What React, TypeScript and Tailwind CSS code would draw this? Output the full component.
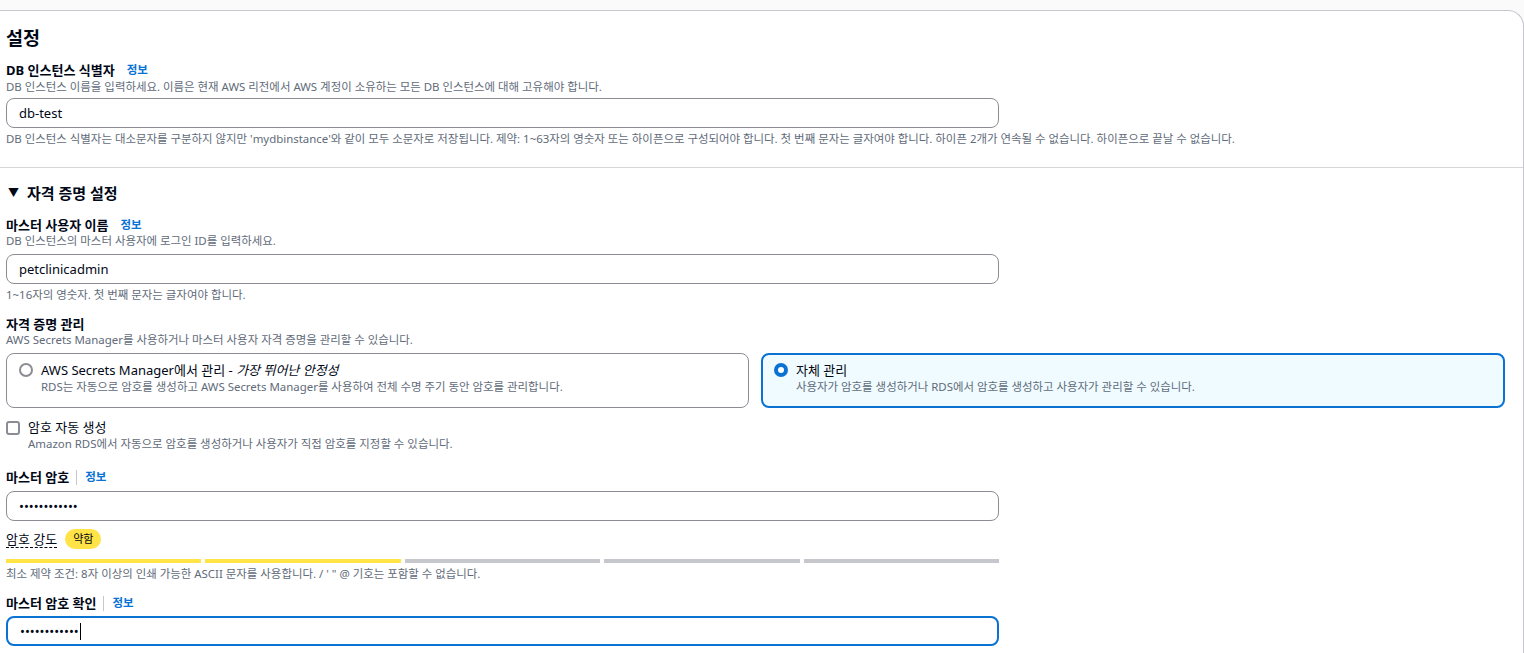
import React from "react";

const FONT = { fontFamily: '"Noto Sans", "Noto Sans CJK KR", sans-serif' };

function Info({ sep = false }: { sep?: boolean }) {
  return (
    <span className={`flex items-center ${sep ? "ml-[7px]" : "ml-[12px]"}`}>
      {sep && <span className="mr-[8px] h-[15px] w-px bg-[#c6c6cd]" />}
      <span className="text-[11.5px] font-bold text-[#0972d3]">정보</span>
    </span>
  );
}

function Label({ children, info }: { children: React.ReactNode; info: React.ReactNode }) {
  return (
    <div className="flex h-[16px] items-center">
      <span className="text-[13px] font-bold leading-[16px] text-[#000716]">{children}</span>
      {info}
    </div>
  );
}

function Desc({ children, className = "" }: { children: React.ReactNode; className?: string }) {
  return <div className={`whitespace-nowrap text-[11.45px] leading-[14px] text-[#5f6b7a] ${className}`}>{children}</div>;
}

function Input({ value, focused = false, className = "", caret = false }: { value: string; focused?: boolean; className?: string; caret?: boolean }) {
  return (
    <div
      className={`flex h-[30px] w-[993px] items-center rounded-[8px] bg-white px-[12px] ${
        focused ? "border-2 border-[#0972d3] px-[11px]" : "border border-[#8c8c94]"
      } ${className}`}
    >
      <span className="text-[13px] leading-[16px] text-[#000716]">{value}</span>
      {caret && <span className="ml-[1px] h-[17px] w-px bg-black" />}
    </div>
  );
}

export default function App() {
  const dots = "••••••••••••";
  return (
    <div style={FONT} className="h-[653px] w-[1524px] overflow-hidden bg-[#fafafa]">
      <div className="mt-[10px] h-[700px] -ml-[20px] rounded-tr-[16px] border-t border-r border-[#c6c6cd] bg-white pl-[26px] pt-[14px]">
        <div className="text-[18.5px] font-bold leading-[26px] text-[#000716]">설정</div>

        <div className="mt-[11px]">
          <Label info={<Info />}>DB 인스턴스 식별자</Label>
          <Desc className="mt-[2px]">DB 인스턴스 이름을 입력하세요. 이름은 현재 AWS 리전에서 AWS 계정이 소유하는 모든 DB 인스턴스에 대해 고유해야 합니다.</Desc>
          <Input value="db-test" className="mt-[4px]" />
          <Desc className="mt-[4px]">DB 인스턴스 식별자는 대소문자를 구분하지 않지만 'mydbinstance'와 같이 모두 소문자로 저장됩니다. 제약: 1~63자의 영숫자 또는 하이픈으로 구성되어야 합니다. 첫 번째 문자는 글자여야 합니다. 하이픈 2개가 연속될 수 없습니다. 하이픈으로 끝날 수 없습니다.</Desc>
        </div>

        <div className="-ml-[26px] mt-[21px] h-px bg-[#d5d5da]" />

        <div className="mt-[15px] flex h-[20px] items-center text-[15px] font-bold text-[#000716]">
          <span className="ml-[2px] mr-[8px] text-[11px]">▼</span>자격 증명 설정
        </div>

        <div className="mt-[14px]">
          <Label info={<Info />}>마스터 사용자 이름</Label>
          <Desc className="mt-[1px]">DB 인스턴스의 마스터 사용자에 로그인 ID를 입력하세요.</Desc>
          <Input value="petclinicadmin" className="mt-[6px]" />
          <Desc className="mt-[4px]">1~16자의 영숫자. 첫 번째 문자는 글자여야 합니다.</Desc>
        </div>

        <div className="mt-[14px]">
          <Label info={null}>자격 증명 관리</Label>
          <Desc className="mt-[1px]">AWS Secrets Manager를 사용하거나 마스터 사용자 자격 증명을 관리할 수 있습니다.</Desc>
          <div className="mt-[6px] flex w-[1499px] gap-[12px]">
            <div className="flex h-[55px] flex-1 items-start gap-[8px] rounded-[8px] border border-[#8c8c94] bg-white pl-[12px] pt-[8px]">
              <span className="mt-[1px] h-[14px] w-[14px] rounded-full border-2 border-[#8c8c94] bg-white" />
              <div>
                <div className="text-[13px] leading-[16px] text-[#000716]">
                  AWS Secrets Manager에서 관리 - <i>가장 뛰어난 안정성</i>
                </div>
                <Desc className="mt-[2px]">RDS는 자동으로 암호를 생성하고 AWS Secrets Manager를 사용하여 전체 수명 주기 동안 암호를 관리합니다.</Desc>
              </div>
            </div>
            <div className="flex h-[55px] flex-1 items-start gap-[8px] rounded-[8px] border-2 border-[#0972d3] bg-[#f0fbff] pl-[11px] pt-[7px]">
              <span className="mt-[1px] flex h-[14px] w-[14px] items-center justify-center rounded-full bg-[#0972d3]">
                <span className="h-[6px] w-[6px] rounded-full bg-white" />
              </span>
              <div>
                <div className="text-[13px] leading-[16px] text-[#000716]">자체 관리</div>
                <Desc className="mt-[2px]">사용자가 암호를 생성하거나 RDS에서 암호를 생성하고 사용자가 관리할 수 있습니다.</Desc>
              </div>
            </div>
          </div>
        </div>

        <div className="mt-[11px] flex gap-[8px]">
          <span className="mt-[2px] h-[14px] w-[14px] rounded-[3px] border-2 border-[#8c8c94] bg-white" />
          <div>
            <div className="text-[13px] leading-[16px] text-[#000716]">암호 자동 생성</div>
            <Desc className="mt-[2px]">Amazon RDS에서 자동으로 암호를 생성하거나 사용자가 직접 암호를 지정할 수 있습니다.</Desc>
          </div>
        </div>

        <div className="mt-[18px]">
          <Label info={<Info sep />}>마스터 암호</Label>
          <Input value={dots} className="mt-[6px]" />
          <div className="mt-[8px] flex h-[20px] items-center gap-[8px]">
            <span className="border-b border-dashed border-[#000716] text-[13px] leading-[16px] text-[#000716]">암호 강도</span>
            <span className="rounded-full bg-[#ffe347] px-[8px] text-[11px] leading-[20px] text-[#000716]">약함</span>
          </div>
          <div className="mt-[10px] flex w-[993px] gap-[4px]">
            <div className="h-[4px] flex-1 bg-[#ffe347]" />
            <div className="h-[4px] flex-1 bg-[#ffe347]" />
            <div className="h-[4px] flex-1 bg-[#c6c6cd]" />
            <div className="h-[4px] flex-1 bg-[#c6c6cd]" />
            <div className="h-[4px] flex-1 bg-[#c6c6cd]" />
          </div>
          <Desc className="mt-[4px]">최소 제약 조건: 8자 이상의 인쇄 가능한 ASCII 문자를 사용합니다. / ' " @ 기호는 포함할 수 없습니다.</Desc>
        </div>

        <div className="mt-[14px]">
          <Label info={<Info sep />}>마스터 암호 확인</Label>
          <Input value={dots} focused caret className="mt-[5px]" />
        </div>
      </div>
    </div>
  );
}
